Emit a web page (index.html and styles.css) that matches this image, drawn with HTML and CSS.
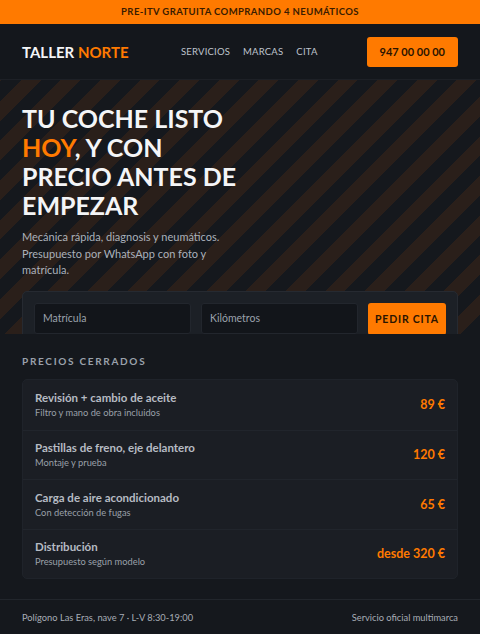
FILE: index.html
```html
<!DOCTYPE html>
<html lang="es">
<head>
    <meta charset="UTF-8">
    <meta name="viewport" content="width=device-width, initial-scale=1">
    <title>Taller Norte</title>
    <link rel="stylesheet" href="styles.css">
</head>
<body>
    <div class="promo">PRE-ITV GRATUITA COMPRANDO 4 NEUMÁTICOS</div>

    <header class="header">
        <div class="logo">TALLER <span>NORTE</span></div>
        <nav class="nav">
            <a href="#">SERVICIOS</a>
            <a href="#">MARCAS</a>
            <a href="#">CITA</a>
        </nav>
        <a class="phone" href="#">947 00 00 00</a>
    </header>

    <section class="hero">
        <h1>TU COCHE LISTO<br><em>HOY</em>, Y CON<br>PRECIO ANTES DE<br>EMPEZAR</h1>
        <p class="lead">Mecánica rápida, diagnosis y neumáticos. Presupuesto por WhatsApp con foto y matrícula.</p>

        <form class="booking">
            <input type="text" placeholder="Matrícula">
            <input type="text" placeholder="Kilómetros">
            <button type="submit">PEDIR CITA</button>
        </form>
    </section>

    <main class="prices">
        <h2>PRECIOS CERRADOS</h2>
        <ul class="price-list">
            <li>
                <div>
                    <p class="name">Revisión + cambio de aceite</p>
                    <p class="note">Filtro y mano de obra incluidos</p>
                </div>
                <span class="price">89 €</span>
            </li>
            <li>
                <div>
                    <p class="name">Pastillas de freno, eje delantero</p>
                    <p class="note">Montaje y prueba</p>
                </div>
                <span class="price">120 €</span>
            </li>
            <li>
                <div>
                    <p class="name">Carga de aire acondicionado</p>
                    <p class="note">Con detección de fugas</p>
                </div>
                <span class="price">65 €</span>
            </li>
            <li>
                <div>
                    <p class="name">Distribución</p>
                    <p class="note">Presupuesto según modelo</p>
                </div>
                <span class="price">desde 320 €</span>
            </li>
        </ul>
    </main>

    <footer class="footer">
        <span>Polígono Las Eras, nave 7 · L-V 8:30-19:00</span>
        <span>Servicio oficial multimarca</span>
    </footer>
</body>
</html>
```

FILE: styles.css
```css
* { box-sizing: border-box; }

body {
    margin: 0;
    background: #15181d;
    color: #e8eaee;
    font-family: Lato, "Open Sans", sans-serif;
}

.promo {
    height: 24px;
    background: #ff7a00;
    color: #3a1c00;
    font-size: 9.5px;
    font-weight: 700;
    letter-spacing: 0.4px;
    text-align: center;
    line-height: 24px;
}

.header {
    height: 56px;
    display: flex;
    align-items: center;
    padding: 0 22px;
    background: #14171c;
    border-bottom: 1px solid #1d2026;
}

.logo {
    font-size: 15px;
    font-weight: 700;
    color: #f4f5f7;
    width: 159px;
}

.logo span { color: #ff7a00; }

.nav {
    display: flex;
    gap: 13px;
    flex: 1;
}

.nav a {
    color: #bfc4cc;
    font-size: 9.5px;
    letter-spacing: 0.2px;
    text-decoration: none;
}

.phone {
    background: #ff7a00;
    color: #2a1400;
    font-size: 11px;
    font-weight: 700;
    text-decoration: none;
    padding: 0 13px;
    height: 30px;
    line-height: 30px;
    border-radius: 3px;
}

.hero {
    height: 254px;
    overflow: hidden;
    padding: 24px 22px 0;
    background: repeating-linear-gradient(-45deg,
        #15181d 0, #15181d 14px,
        #2a1f1a 14px, #2a1f1a 28px);
}

.hero h1 {
    margin: 0;
    font-size: 25px;
    line-height: 29px;
    font-weight: 700;
    color: #f4f5f7;
}

.hero h1 em {
    font-style: normal;
    color: #ff7a00;
}

.lead {
    margin: 9px 0 0;
    width: 215px;
    font-size: 11px;
    line-height: 16.5px;
    color: #aab1bb;
}

.booking {
    margin-top: 12px;
    display: flex;
    gap: 10px;
    padding: 11px 11px;
    background: #1c2026;
    border: 1px solid #262a31;
    border-radius: 5px;
}

.booking input {
    flex: 1;
    min-width: 0;
    height: 31px;
    padding: 0 8px;
    background: #12151a;
    border: 1px solid #22262d;
    border-radius: 3px;
    font-family: inherit;
    font-size: 10.5px;
    color: #e8eaee;
}

.booking input::placeholder { color: #9ba2ac; }

.booking button {
    width: 78px;
    height: 32px;
    white-space: nowrap;
    background: #ff7a00;
    border: none;
    border-radius: 3px;
    font-family: inherit;
    font-size: 10.5px;
    font-weight: 700;
    letter-spacing: 0.8px;
    color: #2a1400;
}

.prices {
    padding: 21px 22px 20px;
}

.prices h2 {
    margin: 0 0 12px;
    font-size: 10px;
    font-weight: 700;
    letter-spacing: 1.7px;
    color: #9aa1ab;
}

.price-list {
    list-style: none;
    margin: 0;
    padding: 0;
    background: #1b1e24;
    border: 1px solid #1f232a;
    border-radius: 5px;
}

.price-list li {
    height: 49.5px;
    display: flex;
    align-items: center;
    justify-content: space-between;
    padding: 0 12px;
    border-top: 1px solid #21252c;
}

.price-list li:first-child { border-top: none; }

.name {
    margin: 0;
    font-size: 11.5px;
    font-weight: 700;
    color: #b6bbc3;
}

.note {
    margin: 3px 0 0;
    font-size: 9.3px;
    color: #9aa0a9;
}

.price {
    color: #ff7a00;
    font-size: 12.5px;
    font-weight: 700;
}

.footer {
    display: flex;
    justify-content: space-between;
    padding: 0 22px 2px;
    height: 37px;
    align-items: center;
    border-top: 1px solid #22262c;
    font-size: 9.3px;
    color: #a7adb6;
}
```
